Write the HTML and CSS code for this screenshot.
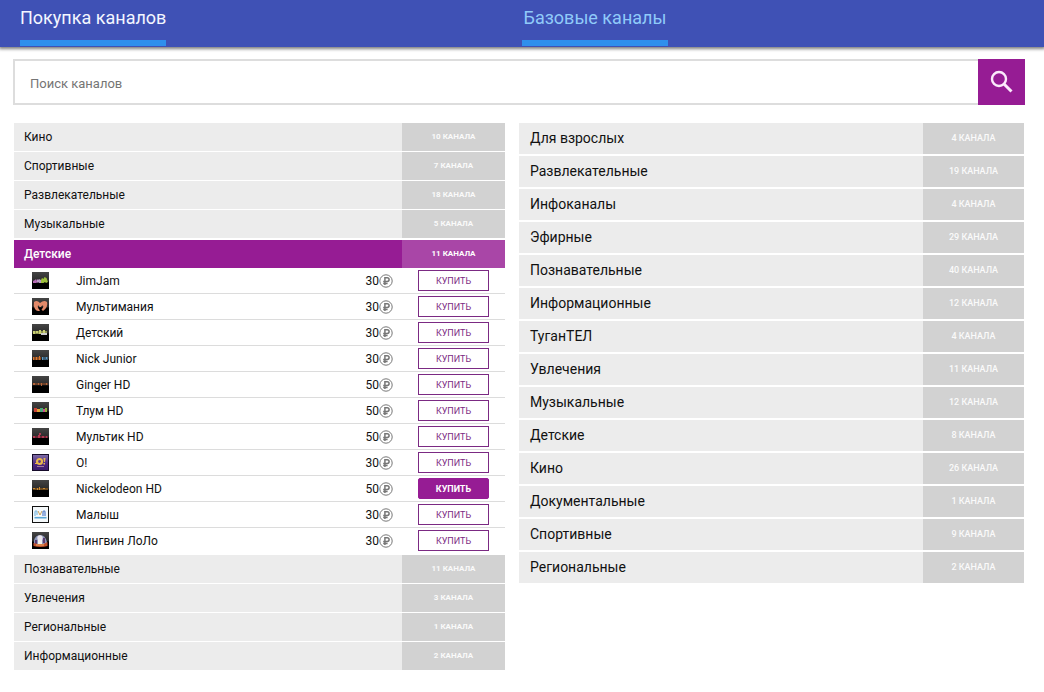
FILE: index.html
```html
<!DOCTYPE html>
<html lang="ru">
<head>
<meta charset="utf-8">
<title>Покупка каналов</title>
<meta name="viewport" content="width=device-width, initial-scale=1">
<link rel="stylesheet" href="styles.css">
</head>
<body>
<svg class="defs" aria-hidden="true">
  <defs>
    <linearGradient id="gloss" x1="0" y1="0" x2="0" y2="1">
      <stop offset="0" stop-color="#444"/><stop offset=".5" stop-color="#2c2c2c"/><stop offset=".6" stop-color="#000"/><stop offset="1" stop-color="#000"/>
    </linearGradient>
    <linearGradient id="violet" x1="0" y1="0" x2="0" y2="1">
      <stop offset="0" stop-color="#7d6aa3"/><stop offset=".6" stop-color="#4b2480"/><stop offset="1" stop-color="#3b1c6b"/>
    </linearGradient>
    <symbol id="ruble" viewBox="0 0 14 14">
      <g fill="none" stroke="#777"><circle cx="7" cy="7" r="6.2"/><path d="M5.900 11V3.700H8.200a1.900 1.900 0 0 1 0 3.800H4.200M4.200 9.400H8.600" stroke-width="1.500"/></g>
    </symbol>
  </defs>
</svg>
<header class="topbar">
  <nav class="tabs">
    <a class="tab tab-active" href="#paid">Покупка каналов</a>
    <a class="tab" href="#basic">Базовые каналы</a>
  </nav>
</header>
<main class="page">
  <form class="search" role="search">
    <input class="search-input" type="text" placeholder="Поиск каналов" aria-label="Поиск каналов">
    <button class="search-button" type="button" aria-label="Найти">
      <svg class="search-icon" viewBox="0 0 24 24"><g fill="none" stroke="#fbe9fb" stroke-width="2.400"><circle cx="9" cy="9" r="7"/><path d="M14 14L21.500 21.500" stroke-width="3"/></g></svg>
    </button>
  </form>
  <div class="columns">
    <section class="column column-paid" id="paid" aria-label="Покупка каналов">
      <button class="category" type="button"><span class="title">Кино</span><span class="count">10 КАНАЛА</span></button>
      <button class="category" type="button"><span class="title">Спортивные</span><span class="count">7 КАНАЛА</span></button>
      <button class="category" type="button"><span class="title">Развлекательные</span><span class="count">18 КАНАЛА</span></button>
      <button class="category" type="button"><span class="title">Музыкальные</span><span class="count">5 КАНАЛА</span></button>
      <div class="group">
        <button class="category category-open" type="button" aria-expanded="true"><span class="title">Детские</span><span class="count">11 КАНАЛА</span></button>
        <ul class="channels">
          <li class="channel">
            <svg class="logo" viewBox="0 0 17 17"><rect width="17" height="17" fill="url(#gloss)"/><path d="M1 9l2-1 1-1 1 2 1 1-2 1H1z" fill="#b56ab4"/><path d="M5 7.500h2v3H5zM7 7l2 1v3H7z" fill="#b99ac4"/><path d="M9 8l1-2 1.500 1 1-2 2 1 1.500 4-2 1-1-1-1.500 1H9z" fill="#9dbf3c"/></svg>
            <span class="name">JimJam</span><span class="price">30<svg class="ruble" role="img" aria-label="₽"><use href="#ruble"/></svg></span><button class="buy" type="button">КУПИТЬ</button></li>
          <li class="channel">
            <svg class="logo" viewBox="0 0 17 17"><rect width="17" height="17" fill="url(#gloss)"/><path d="M2 4Q5 1.500 8 5Q12 1.500 15 4Q16.500 9 11 13L9.500 11.500Q12 9 11 7.500Q9.500 7 9 9H7.500Q7 7 6 7.500Q5 9 8 12.500Q5 14 3 11Q1 8 2 4z" fill="#e38a6a"/></svg>
            <span class="name">Мультимания</span><span class="price">30<svg class="ruble" role="img" aria-label="₽"><use href="#ruble"/></svg></span><button class="buy" type="button">КУПИТЬ</button></li>
          <li class="channel">
            <svg class="logo" viewBox="0 0 17 17"><rect width="17" height="17" fill="url(#gloss)"/><path d="M1 7h14v3H1z" fill="#8c9150"/><path d="M1 7h2v3H1zM4 7h2v2H4zM7 6h2v4H7zM11 6h2v3h-2z" fill="#c9cf72"/><path d="M9 9h6v2H9z" fill="#ccc"/></svg>
            <span class="name">Детский</span><span class="price">30<svg class="ruble" role="img" aria-label="₽"><use href="#ruble"/></svg></span><button class="buy" type="button">КУПИТЬ</button></li>
          <li class="channel">
            <svg class="logo" viewBox="0 0 17 17"><rect width="17" height="17" fill="url(#gloss)"/><path d="M1 7h8v3H1z" fill="#8a4c24"/><path d="M1 7h1v3H1zM4 7h1v3H4zM7 6h1v4H7z" fill="#d9772f"/><path d="M10 7h6v3h-6z" fill="#3a5b74"/><path d="M10 7h1v3h-1zM14 7h1v2h-1z" fill="#5f9cc4"/></svg>
            <span class="name">Nick Junior</span><span class="price">30<svg class="ruble" role="img" aria-label="₽"><use href="#ruble"/></svg></span><button class="buy" type="button">КУПИТЬ</button></li>
          <li class="channel">
            <svg class="logo" viewBox="0 0 17 17"><rect width="17" height="17" fill="url(#gloss)"/><path d="M1 7h15v2H1z" fill="#6b3f28"/><path d="M1 7h2v2H1zM6 7h1v2H6zM9 7h1v3H9zM14 7h1v2h-1z" fill="#b5663a"/></svg>
            <span class="name">Ginger HD</span><span class="price">50<svg class="ruble" role="img" aria-label="₽"><use href="#ruble"/></svg></span><button class="buy" type="button">КУПИТЬ</button></li>
          <li class="channel">
            <svg class="logo" viewBox="0 0 17 17"><rect width="17" height="17" fill="url(#gloss)"/><path d="M2 6h3v4H2z" fill="#c84236"/><path d="M5 7h3v3H5z" fill="#e0a33a"/><path d="M8 6h3v4H8z" fill="#4aa87c"/><path d="M11 7h2v3h-2z" fill="#cf4a8e"/><path d="M13 6h2v4h-2z" fill="#8fb13c"/></svg>
            <span class="name">Тлум HD</span><span class="price">50<svg class="ruble" role="img" aria-label="₽"><use href="#ruble"/></svg></span><button class="buy" type="button">КУПИТЬ</button></li>
          <li class="channel">
            <svg class="logo" viewBox="0 0 17 17"><rect width="17" height="17" fill="url(#gloss)"/><path d="M1 8h15v2H1z" fill="#6b2535"/><path d="M1 8h2v2H1zM6 7h2v3H6zM10 8h2v2h-2zM14 8h1v2h-1zM7 5h2v2H7z" fill="#b23a52"/></svg>
            <span class="name">Мультик HD</span><span class="price">50<svg class="ruble" role="img" aria-label="₽"><use href="#ruble"/></svg></span><button class="buy" type="button">КУПИТЬ</button></li>
          <li class="channel">
            <svg class="logo" viewBox="0 0 17 17"><rect width="17" height="17" fill="#160b2a"/><rect x="1" y="1" width="15" height="15" fill="url(#violet)"/><circle cx="7.500" cy="7.500" r="2.500" fill="none" stroke="#e9b64c" stroke-width="2.200"/><path d="M11.500 4h2l-.5 4h-1zM11.500 9h1.500v1.500h-1.500zM3 9h2v1H3z" fill="#e9b64c"/><path d="M5 12.500h7" stroke="#a37ba0"/></svg>
            <span class="name">О!</span><span class="price">30<svg class="ruble" role="img" aria-label="₽"><use href="#ruble"/></svg></span><button class="buy" type="button">КУПИТЬ</button></li>
          <li class="channel">
            <svg class="logo" viewBox="0 0 17 17"><rect width="17" height="17" fill="url(#gloss)"/><path d="M1 8h15v2H1z" fill="#6e4a1c"/><path d="M1 8h2v1H1zM5 8h1v2H5zM7 7h1v3H7zM11 8h2v1h-2z" fill="#c98a34"/></svg>
            <span class="name">Nickelodeon HD</span><span class="price">50<svg class="ruble" role="img" aria-label="₽"><use href="#ruble"/></svg></span><button class="buy buy-active" type="button">КУПИТЬ</button></li>
          <li class="channel">
            <svg class="logo" viewBox="0 0 17 17"><rect width="17" height="17" fill="#111"/><rect x="1" y="1" width="15" height="15" fill="#f4f8fa"/><path d="M3 10V6q1-2 2 0v3" fill="none" stroke="#8ec3e6" stroke-width="1.400"/><path d="M6 5l2 4 2-4" fill="none" stroke="#c9a15a"/><path d="M11 10V6q1.500-2 2 0v4" fill="none" stroke="#6d8fd0" stroke-width="1.400"/><path d="M2.500 11.700h12" stroke="#5aa6d6" stroke-width="1.600"/></svg>
            <span class="name">Малыш</span><span class="price">30<svg class="ruble" role="img" aria-label="₽"><use href="#ruble"/></svg></span><button class="buy" type="button">КУПИТЬ</button></li>
          <li class="channel">
            <svg class="logo" viewBox="0 0 17 17"><rect width="17" height="17" fill="url(#gloss)"/><path d="M2 12q-1-7 5-9 6-1 8 7l-1 3z" fill="#8b94b8"/><circle cx="8" cy="6" r="2.700" fill="#e9e4ea"/><path d="M6 8h4v4H6z" fill="#f3f0ee"/><path d="M3 8h2v4H3zM11 6h2v5h-2z" fill="#5a3a6e"/><path d="M1.500 11l4 1h6l4-2v4q-7 2-14 0z" fill="#c4532f"/><path d="M4 13h8" stroke="#efb46a"/></svg>
            <span class="name">Пингвин ЛоЛо</span><span class="price">30<svg class="ruble" role="img" aria-label="₽"><use href="#ruble"/></svg></span><button class="buy" type="button">КУПИТЬ</button></li>
        </ul>
      </div>
      <button class="category" type="button"><span class="title">Познавательные</span><span class="count">11 КАНАЛА</span></button>
      <button class="category" type="button"><span class="title">Увлечения</span><span class="count">3 КАНАЛА</span></button>
      <button class="category" type="button"><span class="title">Региональные</span><span class="count">1 КАНАЛА</span></button>
      <button class="category" type="button"><span class="title">Информационные</span><span class="count">2 КАНАЛА</span></button>
    </section>
    <section class="column column-basic" id="basic" aria-label="Базовые каналы">
      <button class="category" type="button"><span class="title">Для взрослых</span><span class="count">4 КАНАЛА</span></button>
      <button class="category" type="button"><span class="title">Развлекательные</span><span class="count">19 КАНАЛА</span></button>
      <button class="category" type="button"><span class="title">Инфоканалы</span><span class="count">4 КАНАЛА</span></button>
      <button class="category" type="button"><span class="title">Эфирные</span><span class="count">29 КАНАЛА</span></button>
      <button class="category" type="button"><span class="title">Познавательные</span><span class="count">40 КАНАЛА</span></button>
      <button class="category" type="button"><span class="title">Информационные</span><span class="count">12 КАНАЛА</span></button>
      <button class="category" type="button"><span class="title">ТуганТЕЛ</span><span class="count">4 КАНАЛА</span></button>
      <button class="category" type="button"><span class="title">Увлечения</span><span class="count">11 КАНАЛА</span></button>
      <button class="category" type="button"><span class="title">Музыкальные</span><span class="count">12 КАНАЛА</span></button>
      <button class="category" type="button"><span class="title">Детские</span><span class="count">8 КАНАЛА</span></button>
      <button class="category" type="button"><span class="title">Кино</span><span class="count">26 КАНАЛА</span></button>
      <button class="category" type="button"><span class="title">Документальные</span><span class="count">1 КАНАЛА</span></button>
      <button class="category" type="button"><span class="title">Спортивные</span><span class="count">9 КАНАЛА</span></button>
      <button class="category" type="button"><span class="title">Региональные</span><span class="count">2 КАНАЛА</span></button>
    </section>
  </div>
</main>
</body>
</html>
```
FILE: styles.css
```css
* { box-sizing: border-box; }
body { margin: 0; background: #fff; color: #111; font-family: Roboto, "Liberation Sans", sans-serif; font-size: 12px; }
button, input { font: inherit; color: inherit; border: 0; border-radius: 0; margin: 0; padding: 0; }
button { cursor: pointer; }
.defs { display: block; width: 0; height: 0; }

.topbar { background: #3f51b5; box-shadow: 0 1px 3px 1px rgba(0, 0, 0, .5); padding: 0 20px; }
.tabs { display: grid; grid-template-columns: 1fr 1fr; justify-items: start; height: 47px; }
.tab { min-width: 146px; height: 46px; border-bottom: 6px solid #2f8fec; color: #90caf9; font-size: 18px; line-height: 36px; text-align: center; text-decoration: none; }
.tab-active { color: #f3f6ff; }

.page { padding: 12px 20px 20px 14px; }
.search { display: flex; height: 46px; margin: 0 -1px 18px; }
.search-input { flex: 1; min-width: 0; border: 2px solid #ddd; border-right: 0; padding: 2px 15px 0; font-size: 13px; background: #fff; }
.search-input::placeholder { color: #757575; opacity: 1; }
.search-button { display: grid; place-items: center; width: 47px; background: #961c94; }
.search-icon { width: 24px; height: 24px; }

.columns { display: grid; grid-template-columns: minmax(0, 491fr) minmax(0, 505fr); gap: 14px; align-items: start; }
.column { display: flex; flex-direction: column; }
.category { display: flex; width: 100%; background: #ececec; text-align: left; }
.title { flex: 1; }
.count { background: #d2d2d2; color: #fafafa; font-weight: 500; text-align: center; }

.column-paid { gap: 1px; }
.column-paid .category { font-size: 12px; line-height: 28px; }
.column-paid .title { padding-left: 10px; }
.column-paid .count { width: 103px; font-size: 8px; font-weight: 700; }

.column-basic { gap: 2px; }
.column-basic .category { font-size: 14px; line-height: 31px; }
.column-basic .title { padding-left: 11px; }
.column-basic .count { width: 101px; font-size: 9px; }

.group { margin-top: 1px; }
.column-paid .category-open { background: #961c94; color: #fff; font-weight: 500; }
.category-open .count { background: #a946a7; color: #fff; }

.channels { list-style: none; margin: 0; padding: 0; }
.channel { display: flex; align-items: center; height: 26px; padding: 0 16px 0 18px; border-bottom: 1px solid #dcdcdc; }
.channel:last-child { border-bottom-color: transparent; }
.logo { width: 17px; height: 17px; margin-right: 27px; }
.name { flex: 1; }
.price { display: flex; align-items: center; margin-right: 25px; }
.ruble { width: 14px; height: 14px; }
.buy { width: 71px; height: 21px; border: 1px solid #7b2a83; background: #fff; color: #7b2a83; font-size: 9px; text-align: center; }
.buy-active { background: #961c94; border-color: #961c94; border-radius: 2px; color: #fff; font-weight: 700; }
```
